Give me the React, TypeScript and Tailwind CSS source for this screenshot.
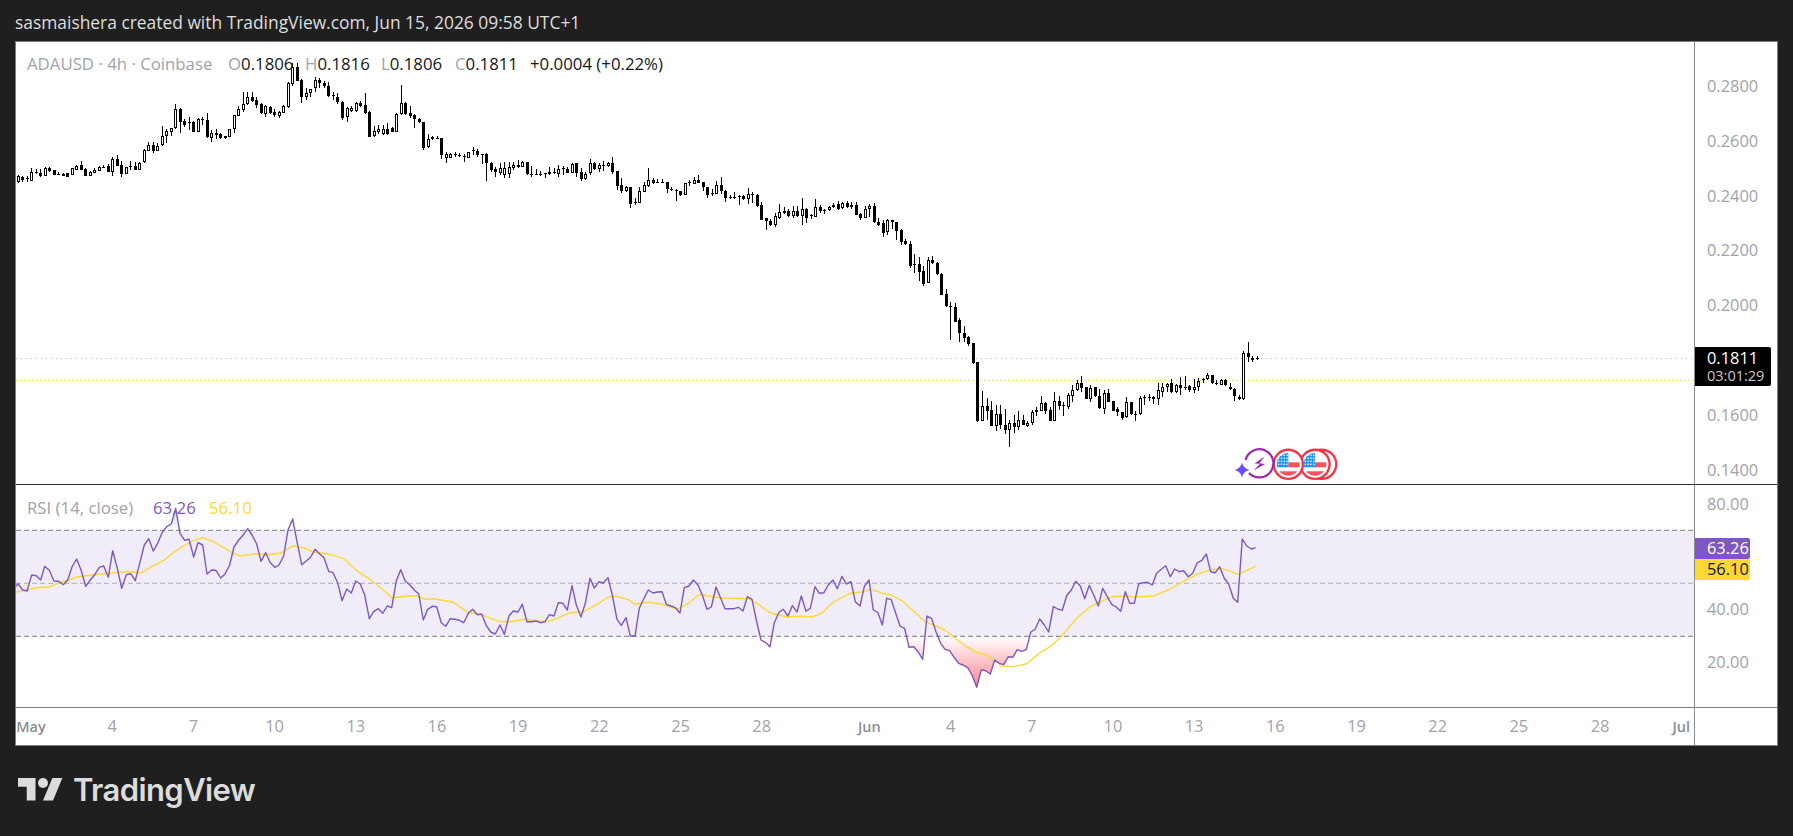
type Candle = [number, number, number, number, number]

// body top, body bottom, wick top, wick bottom, up (1) or down (0)
const candlesA: Candle[] = [
  [408,425,405,428,1],[410,420,408,427,0],[414,416,407,425,1],[397,423,385,424,1],[395,398,388,402,1],[398,408,388,410,0],
  [383,407,380,408,1],[383,392,380,396,0],[391,405,390,406,0],[402,404,395,405,0],[403,407,398,409,0],[400,410,398,411,0],
  [385,405,384,406,1],[377,390,375,391,1],[376,390,363,391,0],[387,407,385,408,0],[396,407,394,408,1],[390,398,385,400,1],
  [380,392,378,393,1],[380,383,376,384,0],[378,395,372,396,0],[356,397,350,407,1],[357,377,345,378,0],[376,402,362,410,0],
  [382,401,380,402,1],[378,382,363,390,0],[378,390,365,391,0],[368,390,366,391,1],[330,367,328,368,1],[316,332,307,333,1],
  [316,332,307,338,0],[317,332,310,333,1],[289,316,258,318,1],[272,289,268,308,1],[265,275,263,287,1],[207,265,192,266,1],
  [207,245,205,280,0],[243,256,238,262,0],[245,250,232,270,0],[246,276,242,277,0],[236,275,234,276,1],[236,240,232,255,0],
  [240,292,220,293,0],[280,295,270,305,1],[280,285,268,297,0],[283,295,280,296,0],[289,295,287,296,0],[268,290,266,291,1],
  [226,268,225,280,1],[207,227,197,228,1],[193,210,155,215,1],[172,193,155,194,1],[172,182,157,185,0],[180,195,172,205,0],
  [192,220,190,221,0],[198,222,196,230,1],[200,220,198,222,0],[216,225,208,232,0],[217,228,212,235,1],[197,218,195,219,1],
  [128,200,125,205,1],[82,133,70,137,1],[82,122,70,124,0],[120,170,118,190,0],[160,172,143,180,1],[148,160,146,172,1],
  [120,145,112,155,1],[120,130,115,145,0],[130,138,122,145,0],[138,167,125,172,0],[166,168,157,180,0],[170,187,158,192,0],
  [186,235,182,240,0],[205,232,200,245,1],[203,213,197,215,1],[188,213,186,216,1],[188,197,184,200,0],[195,220,160,222,0],
  [216,290,214,292,0],[272,288,258,290,1],[268,276,255,283,1],[266,283,255,285,1],[267,283,250,285,0],[265,275,262,276,0],
  [222,275,218,276,1],[190,222,135,225,1],[188,222,187,224,0],[220,228,198,235,0],[225,238,222,263,0],[238,247,235,248,0],
  [247,325,245,330,0],[298,322,282,323,1],[291,298,289,300,1],[294,296,289,298,0],[295,344,293,358,0],[342,355,336,368,1],
  [342,354,340,355,1],[341,343,337,350,0],[344,348,338,352,0],[347,352,342,365,0],[337,353,335,354,1],[330,333,322,345,0],
  [333,346,328,352,0],[342,344,342,372,0],[342,370,338,422,0],[368,390,366,396,0],[387,396,382,410,0],
]

const candlesB: Candle[] = [
  [115,130,100,135,1],[115,135,97,145,1],[110,133,95,145,1],[105,113,95,120,1],[105,110,90,115,0],[96,110,92,112,1],
  [97,133,96,134,0],[131,133,108,140,0],[132,134,118,136,0],[132,134,122,138,0],[130,132,129,144,0],[126,133,112,134,1],
  [126,130,115,131,0],[118,132,105,140,1],[115,117,108,135,0],[118,128,112,129,0],[102,128,100,129,1],[99,128,98,140,0],
  [127,146,114,152,0],[133,147,125,150,1],[100,130,87,135,1],[100,116,96,120,0],[106,117,100,125,1],[104,108,93,122,0],
  [100,107,95,110,1],[100,125,82,133,0],[124,167,122,180,0],[166,182,145,190,0],[172,182,168,185,1],[172,221,170,233,0],
  [216,218,205,224,0],[184,218,172,219,1],[166,185,156,186,1],[151,168,114,172,1],[150,160,145,162,0],[155,157,148,158,0],
  [155,157,147,158,0],[157,178,155,190,0],[176,178,172,184,0],[179,181,178,212,0],[184,194,182,197,0],[160,194,158,195,1],
  [156,158,150,167,0],[151,161,142,162,1],[151,158,135,159,0],[157,172,155,182,0],[172,194,170,204,0],[190,192,178,198,0],
  [166,191,153,192,1],[166,182,141,192,0],[182,204,180,216,0],[200,202,196,206,0],[200,202,186,206,0],[197,199,195,224,0],
  [197,207,194,210,0],[192,206,175,222,1],[192,196,185,218,0],[195,227,193,232,0],[226,269,217,270,0],[265,274,263,300,0],
  [274,285,268,288,0],[258,285,250,290,1],[247,263,222,268,1],[243,248,232,252,0],[244,259,236,262,0],[244,258,228,264,1],
  [243,258,228,262,0],[238,257,204,285,1],[237,263,235,278,0],[256,258,252,268,0],[232,260,207,261,1],[232,242,225,250,0],
  [240,242,236,252,0],[232,241,228,242,1],[226,231,220,235,0],[223,236,213,240,0],[219,235,215,237,1],[220,231,213,234,0],
  [225,230,216,236,0],[226,254,216,256,0],[253,264,250,270,0],[238,263,228,264,1],[228,238,222,262,1],[228,277,220,279,0],
  [277,284,265,287,0],[279,310,270,320,0],[270,307,267,315,1],[271,276,270,298,0],[276,302,275,330,0],
]

const candlesC: Candle[] = [
  [60,95,58,105,0],[94,101,88,104,0],[103,167,94,173,0],[161,163,132,188,0],[163,185,141,212,0],[184,221,168,228,0],
  [151,218,140,219,1],[151,158,138,162,0],[159,193,157,195,0],[192,254,188,255,0],[253,288,237,290,0],[289,291,277,390,0],
  [292,335,279,337,0],[331,370,324,396,0],[370,383,348,396,0],[381,401,378,407,0],[400,458,400,461,0],[457,633,455,636,0],
  [589,632,543,633,1],[588,602,564,630,0],[601,647,574,648,0],[613,647,586,662,1],[613,644,585,657,0],[646,660,597,672,0],
  [640,659,630,710,1],[640,650,615,668,0],[631,650,603,660,1],[631,644,615,646,0],[640,647,632,652,1],[606,640,600,644,1],
  [600,607,592,618,1],[579,602,558,603,1],[579,602,575,612,0],[600,632,592,633,0],[574,632,546,633,1],[573,587,558,600,0],
  [586,589,577,618,0],[555,590,548,598,1],[541,557,525,575,1],[519,541,510,542,1],[520,533,498,545,0],[532,566,530,568,0],
  [534,566,526,575,1],[532,558,530,560,0],[559,594,536,596,0],[550,596,540,612,1],[550,575,538,576,0],[574,602,572,604,0],
  [597,607,592,618,0],[607,623,605,630,0],[577,622,562,623,1],[577,613,575,614,0],[611,613,602,632,0],[565,613,558,614,1],
  [560,563,555,585,0],[560,563,552,572,0],[561,568,557,582,0],[541,568,520,584,1],[532,545,520,560,1],[523,530,518,546,1],
  [520,545,507,548,0],[526,545,522,548,1],[526,533,502,555,0],[530,534,498,540,0],[529,540,525,546,0],[531,539,508,548,1],
  [512,532,505,542,1],[507,511,503,518,1],[495,508,490,509,1],[496,520,495,521,0],[518,520,509,526,0],[511,524,508,525,1],
  [511,526,508,527,0],[530,538,519,541,0],[538,558,535,572,0],[561,568,555,570,0],[430,568,423,570,1],[430,442,396,455,0],
  [444,450,438,455,0],[445,448,437,449,0],
]

const allCandles = [
  ...candlesA.map((c) => ({ c, off: 40 })),
  ...candlesB.map((c) => ({ c, off: 130 })),
  ...candlesC.map((c) => ({ c, off: 210 })),
]

type Pt = [number, number]

const rsiA: Pt[] = [
  [15,262],[24,251],[38,270],[51,273],[65,225],[79,227],[92,240],[104,199],[118,211],[132,243],[146,244],[160,254],[173,240],[187,199],[200,177],[214,212],[227,259],[241,240],[254,224],[268,202],[281,198],[295,232],[308,152],[322,205],[335,265],[349,224],[362,221],[376,242],[389,190],[403,135],[416,116],[430,153],[443,130],[457,97],[470,80],[484,72],[497,25],[510,100],[524,121],[537,118],[551,171],[564,128],[578,135],[591,222],[605,210],[618,211],[632,234],[645,222],[659,195],[672,141],[686,120],[699,106],[713,86],[726,105],[740,132],[753,184],[767,158],[780,187],[794,202],[807,195],[821,168],[834,90],[848,57],[861,125],[875,194],[888,184],[902,171],[915,148],[929,162],[942,173],[956,214],[969,218],[983,248],[996,302],[1010,267],[1024,279],[1037,243],[1051,252],[1064,285],[1078,356],[1091,335],[1105,326],[1118,340],[1132,318],[1145,323],[1159,243],[1172,209],[1186,244],[1199,254],[1213,270],[1226,282],[1240,360],[1253,328],[1267,319],[1280,320],[1294,368],[1307,379],[1321,356],[1334,358],[1348,361],[1361,368],[1375,340],[1388,328],[1402,344],[1415,342],[1429,377],[1442,396],[1456,402],
]
const rsiB: Pt[] = [
  [0,255],[13,283],[27,228],[40,213],[54,216],[67,193],[81,245],[94,245],[108,243],[121,248],[135,245],[148,224],[162,228],[175,188],[189,190],[202,210],[216,137],[229,195],[243,231],[256,190],[270,115],[283,144],[297,125],[310,129],[324,113],[337,165],[351,238],[364,256],[378,233],[391,288],[405,288],[418,205],[432,175],[445,150],[459,159],[472,156],[486,155],[499,193],[513,198],[526,203],[540,219],[553,143],[567,138],[580,120],[594,135],[607,165],[621,208],[634,201],[648,141],[661,172],[675,206],[688,206],[702,206],[715,202],[729,213],[742,170],[756,178],[769,240],[783,300],[796,307],[810,320],[823,248],[837,217],[850,208],[864,228],[877,197],[891,216],[904,168],[918,214],[931,205],[945,140],[958,160],[972,158],[985,135],[999,120],[1012,146],[1026,109],[1039,132],[1053,125],[1066,185],[1080,198],[1093,140],[1107,120],[1120,210],[1134,218],
]
const rsiC: Pt[] = [
  [7,315],[20,235],[34,239],[47,280],[60,318],[74,326],[87,382],[101,380],[114,395],[128,418],[141,288],[155,296],[168,335],[182,370],[195,388],[209,392],[222,412],[236,430],[249,435],[263,443],[276,465],[290,502],[304,449],[317,452],[331,462],[344,420],[358,430],[371,434],[385,410],[398,412],[412,389],[425,394],[439,389],[452,337],[466,327],[479,297],[493,315],[506,336],[520,260],[533,267],[547,271],[560,227],[574,210],[587,184],[601,198],[614,236],[628,196],[641,225],[655,258],[668,205],[682,230],[695,253],[709,261],[722,274],[736,215],[749,250],[763,250],[776,191],[790,188],[803,187],[817,195],[830,160],[844,148],[857,137],[871,170],[884,147],[898,155],[911,152],[925,170],[938,160],[952,128],[965,122],[979,102],[992,155],[1006,158],[1019,140],[1033,175],[1046,192],[1060,235],[1073,247],[1087,57],[1100,78],[1114,87],[1127,83],
]

const maA: Pt[] = [
  [15,277],[50,270],[80,263],[118,261],[135,254],[150,247],[175,241],[200,231],[230,227],[270,222],[310,218],[360,215],[395,218],[420,202],[460,182],[490,158],[520,138],[550,122],[578,113],[610,125],[640,142],[665,157],[690,168],[740,161],[770,165],[810,160],[850,137],[880,143],[910,156],[960,163],[1000,175],[1040,212],[1075,235],[1110,262],[1145,293],[1175,290],[1220,287],[1245,298],[1275,296],[1330,307],[1375,337],[1420,346],[1460,362],
]
const maB: Pt[] = [
  [0,245],[30,245],[75,238],[135,245],[160,240],[210,218],[250,215],[290,194],[325,171],[345,168],[385,179],[405,193],[440,187],[485,192],[515,203],[535,206],[565,190],[595,166],[610,164],[640,171],[670,174],[745,176],[770,190],[810,218],[860,231],[905,229],[935,231],[965,220],[1000,186],[1050,160],[1090,155],[1115,148],[1150,161],[1170,163],[1210,185],[1250,222],[1275,245],[1300,255],[1335,270],[1365,295],[1400,320],[1430,338],[1455,343],[1500,373],
]
const maC: Pt[] = [
  [360,437],[400,440],[440,431],[480,398],[510,380],[545,348],[590,295],[630,260],[695,230],[730,228],[775,231],[825,227],[870,207],[915,182],[950,163],[990,150],[1030,146],[1075,163],[1127,139],
]

const toAbs = (pts: Pt[], ox: number, oy: number) =>
  pts.map(([x, y]) => `${(ox + x / 3).toFixed(1)},${(oy + y / 3).toFixed(1)}`).join(" ")

const rsiLine = `${toAbs(rsiA, 10, 500)} ${toAbs(rsiB, 500, 540)} ${toAbs(rsiC, 880, 520)}`
const maLine = `${toAbs(maA, 10, 500)} ${toAbs(maB, 500, 540)} ${toAbs(maC, 880, 520)}`

const priceTicks = ["0.2800", "0.2600", "0.2400", "0.2200", "0.2000", "", "0.1600", "0.1400"]
const mayTicks = ["4", "7", "10", "13", "16", "19", "22", "25", "28"]
const junTicks = ["4", "7", "10", "13", "16", "19", "22", "25", "28"]

function Candles() {
  return (
    <g shapeRendering="crispEdges">
      {allCandles.map(({ c, off }, i) => {
        const x = Math.floor(18 + 4.507 * i)
        const top = Math.round(off + c[0] / 3)
        const bot = Math.max(top + 1, Math.round(off + c[1] / 3))
        const wt = off + c[2] / 3
        const wb = off + c[3] / 3
        return (
          <g key={i}>
            <rect x={x} y={wt} width={1} height={wb - wt} fill="#000" />
            <rect x={x - 1} y={top} width={3} height={bot - top} fill="#000" />
            {c[4] === 1 && bot - top > 2 && (
              <rect x={x} y={top + 1} width={1} height={bot - top - 2} fill="#fff" />
            )}
          </g>
        )
      })}
    </g>
  )
}

function FlagBadge({ cx, id }: { cx: number; id: string }) {
  const cy = 464.3
  const dots = [0, 1, 2, 3].flatMap((r) => [0, 1, 2, 3].map((c) => [c, r]))
  return (
    <g>
      <circle cx={cx} cy={cy} r={14.6} fill="#fff" stroke="#f23645" strokeWidth={2.4} />
      <clipPath id={id}>
        <circle cx={cx} cy={cy} r={11.4} />
      </clipPath>
      <g clipPath={`url(#${id})`}>
        <rect x={cx - 12} y={cy - 12} width={24} height={24} fill="#fff" />
        <rect x={cx} y={cy - 2} width={12} height={5} fill="#f7525f" />
        <rect x={cx - 12} y={cy + 7} width={24} height={6} fill="#f7525f" />
        <rect x={cx - 12} y={cy - 12} width={12} height={15} fill="#2196f3" />
        {dots.map(([c, r]) => (
          <circle key={`${c}-${r}`} cx={cx - 9.6 + c * 2.8} cy={cy - 9 + r * 3} r={0.8} fill="#fff" />
        ))}
      </g>
    </g>
  )
}

function MainPane() {
  return (
    <svg width="1678" height="442" viewBox="16 42 1678 442" className="block">
      <line x1="16" x2="1694" y1="358.5" y2="358.5" stroke="#b9b9b9" strokeDasharray="1 4" />
      <line x1="16" x2="1694" y1="380.5" y2="380.5" stroke="#fdd835" strokeDasharray="1 3" />
      <Candles />
      <circle cx={1321.7} cy={464.3} r={14.6} fill="#fff" stroke="#f23645" strokeWidth={2.4} />
      <FlagBadge cx={1315} id="flag-b" />
      <FlagBadge cx={1288.3} id="flag-a" />
      <path d="M1245.6 460A14.1 14.1 0 1 1 1249 473" fill="#fff" stroke="#9c27b0" strokeWidth={2.2} />
      <path d="M1264.5 456.5L1254.5 463.5L1260 463.8L1253.5 470.500L1265 464L1259.5 463.2Z" fill="#9c27b0" />
      <path d="M1242 462.500Q1243.400 468.600 1249.500 470Q1243.400 471.400 1242 477.500Q1240.600 471.400 1234.500 470Q1240.600 468.600 1242 462.500Z" fill="#6f4dff" />
    </svg>
  )
}

function RsiPane() {
  const y70 = 530.3
  const y30 = 636.3
  const areaPts = `16,${y30} ${rsiLine} 1256,${y30}`
  const topPts = `16,${y70} ${rsiLine} 1256,${y70}`
  return (
    <svg width="1678" height="222" viewBox="16 485 1678 222" className="block">
      <defs>
        <linearGradient id="oversold" gradientUnits="userSpaceOnUse" x1="0" x2="0" y1={y30} y2="687">
          <stop offset="0" stopColor="#f7525f" stopOpacity="0" />
          <stop offset="1" stopColor="#f7525f" stopOpacity="0.7" />
        </linearGradient>
        <linearGradient id="overbought" gradientUnits="userSpaceOnUse" x1="0" x2="0" y1={y70} y2="508">
          <stop offset="0" stopColor="#4caf50" stopOpacity="0" />
          <stop offset="1" stopColor="#4caf50" stopOpacity="0.4" />
        </linearGradient>
        <clipPath id="below30">
          <rect x="16" y={y30} width="1678" height="80" />
        </clipPath>
        <clipPath id="above70">
          <rect x="16" y="485" width="1678" height={y70 - 485} />
        </clipPath>
      </defs>
      <rect x="16" y={y70} width="1678" height={y30 - y70} fill="#f0edf9" />
      <polygon points={areaPts} fill="url(#oversold)" clipPath="url(#below30)" />
      <polygon points={topPts} fill="url(#overbought)" clipPath="url(#above70)" />
      <line x1="16" x2="1694" y1={y70} y2={y70} stroke="#787b86" strokeDasharray="5 3" />
      <line x1="16" x2="1694" y1="583.3" y2="583.3" stroke="#787b86" strokeOpacity="0.55" strokeDasharray="5 3" />
      <line x1="16" x2="1694" y1={y30} y2={y30} stroke="#787b86" strokeDasharray="5 3" />
      <polyline points={maLine} fill="none" stroke="#fdd835" strokeWidth="1.4" strokeLinejoin="round" />
      <polyline points={rsiLine} fill="none" stroke="#7e57c2" strokeWidth="1.4" strokeLinejoin="round" />
    </svg>
  )
}

function Logo() {
  return (
    <svg width="45" height="35" viewBox="0 0 36 28" fill="#dcdcdc">
      <path d="M14 22H7V11H0V4h14v18zM28 22h-8l7.500-18h8L28 22z" />
      <circle cx="20" cy="8" r="4" />
    </svg>
  )
}

export default function App() {
  return (
    <div className="flex h-[836px] w-[1793px] flex-col overflow-hidden bg-[#1f1f1f] font-['Open_Sans',sans-serif]">
      <div className="flex h-[41px] items-center pl-[15px] pt-[4px] text-[17.4px] text-[#dedede]">
        sasmaishera created with TradingView.com, Jun 15, 2026 09:58 UTC+1
      </div>

      <div className="ml-[15px] flex w-[1763px] flex-col border border-[#7d7d7d] bg-white text-[16.4px] text-[#9fa2ab]">
        <div className="flex h-[442px]">
          <div className="relative w-[1678px] overflow-hidden">
            <MainPane />
            <div className="absolute left-[11px] top-[12px] flex whitespace-nowrap text-[16.8px] leading-[20px]">
              <span className="w-[201px]">ADAUSD · 4h · Coinbase</span>
              <span className="w-[77px]">O<span className="text-[#131722]">0.1806</span></span>
              <span className="w-[76px]">H<span className="text-[#131722]">0.1816</span></span>
              <span className="w-[74px]">L<span className="text-[#131722]">0.1806</span></span>
              <span className="w-[75px]">C<span className="text-[#131722]">0.1811</span></span>
              <span className="text-[#131722]">+0.0004 (+0.22%)</span>
            </div>
          </div>
          <div className="relative flex w-[83px] flex-col border-l border-[#8a8a8a] pl-[12px] pt-[17px]">
            {priceTicks.map((t, i) => (
              <div key={i} className="flex h-[54.8px] shrink-0 items-center">{t}</div>
            ))}
            <div className="absolute left-0 top-[305px] flex h-[39px] w-[76px] flex-col justify-center rounded-r-[2px] bg-black pl-[12px]">
              <span className="text-[16.4px] leading-[19px] text-white">0.1811</span>
              <span className="text-[14.5px] leading-[18px] text-[#c9c9c9]">03:01:29</span>
            </div>
          </div>
        </div>

        <div className="z-10 h-px bg-[#2a2e39]" />

        <div className="flex h-[222px]">
          <div className="relative w-[1678px] overflow-hidden">
            <RsiPane />
            <div className="absolute left-[11px] top-[13px] flex whitespace-nowrap text-[16.8px] leading-[20px]">
              <span className="w-[126px]">RSI (14, close)</span>
              <span className="w-[56px] text-[#7e57c2]">63.26</span>
              <span className="text-[#fdd835]">56.10</span>
            </div>
          </div>
          <div className="relative flex w-[83px] flex-col border-l border-[#8a8a8a] pl-[12px]">
            <div className="-mt-[6.500px] flex h-[52.5px] shrink-0 items-center">80.00</div>
            <div className="h-[52.5px] shrink-0" />
            <div className="flex h-[52.5px] shrink-0 items-center">40.00</div>
            <div className="flex h-[52.5px] shrink-0 items-center">20.00</div>
            <div className="absolute left-0 top-[53px] flex h-[21px] w-[55px] items-center rounded-r-[2px] bg-[#7e57c2] pl-[12px] text-white">63.26</div>
            <div className="absolute left-0 top-[74px] flex h-[21px] w-[55px] items-center rounded-r-[2px] bg-[#fdd835] pl-[12px] text-[#131722]">56.10</div>
          </div>
        </div>

        <div className="h-px bg-[#7d7d7d]" />

        <div className="flex h-[37px]">
          <div className="flex w-[1678px] items-center overflow-hidden">
            <span className="ml-[-25.6px] w-[81.2px] flex-none text-center text-[14.5px] font-semibold text-[#8b8e97]">May</span>
            {mayTicks.map((t) => (
              <span key={`m${t}`} className="w-[81.2px] flex-none text-center">{t}</span>
            ))}
            <span className="ml-[26.5px] w-[81.2px] flex-none text-center text-[14.5px] font-semibold text-[#8b8e97]">Jun</span>
            {junTicks.map((t) => (
              <span key={`j${t}`} className="w-[81.2px] flex-none text-center">{t}</span>
            ))}
            <span className="w-[81.2px] flex-none text-center text-[14.5px] font-semibold text-[#8b8e97]">Jul</span>
          </div>
          <div className="w-[83px] border-l border-[#8a8a8a]" />
        </div>
      </div>

      <div className="flex items-center pl-[18px] pt-[26px]">
        <Logo />
        <span className="ml-[10px] font-['Inter',sans-serif] text-[31px] font-semibold leading-[36px] tracking-[-0.6px] text-[#dcdcdc]">
          TradingView
        </span>
      </div>
    </div>
  )
}
